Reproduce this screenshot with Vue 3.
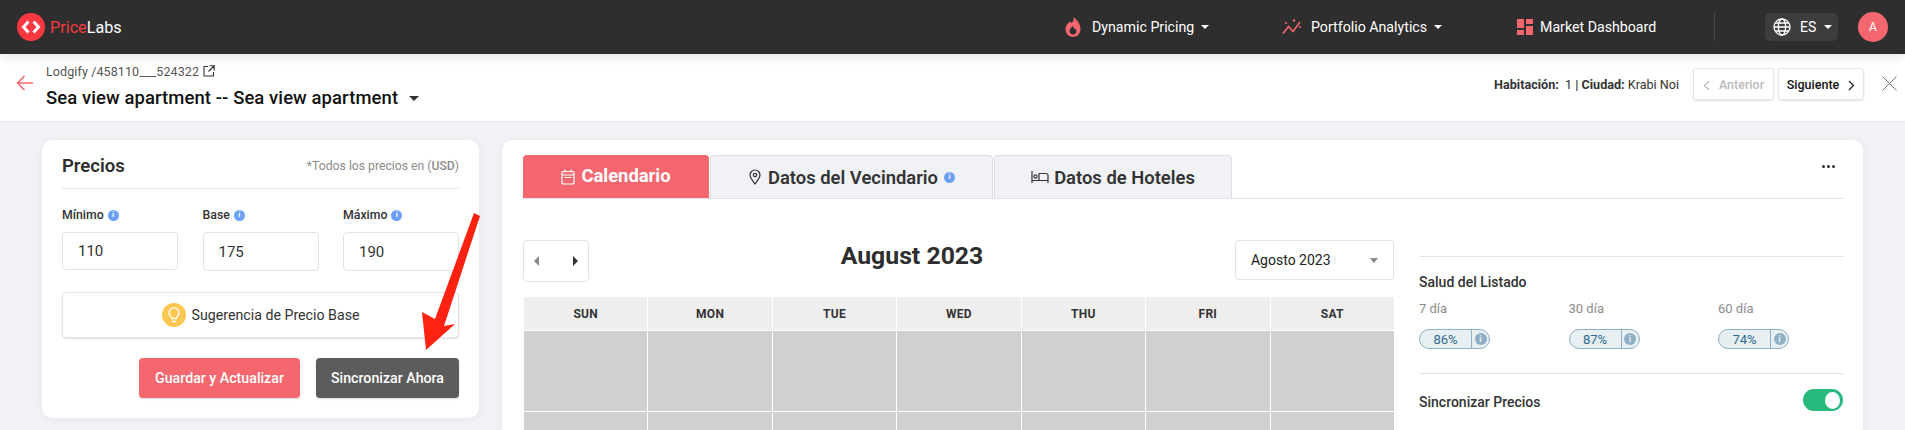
<script setup>
const fields = [
  { label: 'Mínimo', value: '110' },
  { label: 'Base', value: '175' },
  { label: 'Máximo', value: '190' }
]
const days = ['SUN', 'MON', 'TUE', 'WED', 'THU', 'FRI', 'SAT']
const cells = Array.from({ length: 14 }, (_, i) => i)
const health = [
  { label: '7 día', value: '86%' },
  { label: '30 día', value: '87%' },
  { label: '60 día', value: '74%' }
]
</script>

<template>
  <div class="page">
    <header class="topbar">
      <div class="brand">
        <svg class="logo" viewBox="0 0 28 28">
          <circle cx="14" cy="14" r="14" fill="#f9393f" />
          <path d="M11.500 8.500 6.500 14l5 5.500M16.500 8.500l5 5.500-5 5.500" fill="none" stroke="#fff" stroke-width="3" />
        </svg>
        <span class="brand-text"><span class="brand-red">Price</span>Labs</span>
      </div>
      <nav class="nav">
        <div class="nav-item w1">
          <svg class="ico-flame" viewBox="0 0 16 20"><path fill="#f5676f" fill-rule="evenodd" d="M8.500 0c.6 3-.6 4.600-2 6.300C5.800 5.500 5.500 4.800 5.300 4 2.500 6.500.5 9 .5 12.300.5 16.700 3.800 20 8 20s7.500-3.300 7.500-7.700C15.500 7.500 12.500 3 8.500 0zM8 17.500c-2 0-3.500-1.500-3.500-3.400 0-1.800 1.700-3.100 3.200-5 .7 2.400 3.800 2.900 3.800 5.200 0 1.800-1.500 3.200-3.500 3.200z" /></svg>
          <span>Dynamic Pricing</span><i class="caret light"></i>
        </div>
        <div class="nav-item w2">
          <svg class="ico-chart" viewBox="0 0 20 18"><path d="M1 15.500 6.500 8.500l4.500 5L18 4" fill="none" stroke="#f5676f" stroke-width="1.600" /><circle cx="4" cy="5" r="1.100" fill="#f5676f" /><circle cx="12" cy="2.500" r="1.200" fill="#f5676f" /><circle cx="18" cy="9" r="1.100" fill="#f5676f" /></svg>
          <span>Portfolio Analytics</span><i class="caret light"></i>
        </div>
        <div class="nav-item w3">
          <svg class="ico-dash" viewBox="0 0 16 16"><path fill="#f5676f" d="M0 0h7v9H0zM9 0h7v5H9zM9 7h7v9H9zM0 11h7v5H0z" /></svg>
          <span>Market Dashboard</span>
        </div>
      </nav>
      <div class="vline"></div>
      <div class="lang">
        <svg class="globe" viewBox="0 0 18 18" fill="none" stroke="#fff" stroke-width="1.300"><circle cx="9" cy="9" r="8" /><ellipse cx="9" cy="9" rx="3.600" ry="8" /><path d="M1 9h16M2.200 5h13.600M2.200 13h13.600" /></svg>
        <span>ES</span><i class="caret light"></i>
      </div>
      <div class="avatar">A</div>
    </header>

    <section class="subbar">
      <svg class="back" viewBox="0 0 17 16" fill="none" stroke="#f5676f" stroke-width="1.600"><path d="M17 8H1.500M8.500 1 1.500 8l7 7" /></svg>
      <div class="prop">
        <div class="crumb">
          <span>Lodgify /458110___524322</span>
          <svg class="ext" viewBox="0 0 12 12" fill="none" stroke="#333" stroke-width="1.100"><path d="M5 1.500H1v9.500h9.500V7M6.500 .8h4.700v4.700M11 1 5.500 6.500" /></svg>
        </div>
        <div class="prop-title"><span>Sea view apartment -- Sea view apartment</span><i class="caret dark"></i></div>
      </div>
      <div class="sub-right">
        <span class="meta"><b>Habitación:</b>&nbsp; 1 <b>| Ciudad:</b> Krabi Noi</span>
        <div class="pager disabled">
          <svg class="chev" viewBox="0 0 7 11" fill="none" stroke="#bbb" stroke-width="1.200"><path d="M6 1 1.500 5.500 6 10" /></svg>
          <span>Anterior</span>
        </div>
        <div class="pager">
          <span>Siguiente</span>
          <svg class="chev" viewBox="0 0 7 11" fill="none" stroke="#222" stroke-width="1.300"><path d="M1 1l4.500 4.500L1 10" /></svg>
        </div>
        <svg class="close" viewBox="0 0 15 15" fill="none" stroke="#777" stroke-width="1"><path d="M.5 .5l14 14M14.500 .5l-14 14" /></svg>
      </div>
    </section>

    <main class="main">
      <aside class="card prices">
        <div class="prices-head">
          <h2>Precios</h2>
          <span class="note">*Todos los precios en (<b>USD</b>)</span>
        </div>
        <div class="fields">
          <div v-for="f in fields" :key="f.label" class="field">
            <label>{{ f.label }} <i class="info">i</i></label>
            <div class="input">{{ f.value }}</div>
          </div>
        </div>
        <div class="suggest">
          <span class="bulb">
            <svg viewBox="0 0 24 24" fill="none" stroke="#fff" stroke-width="1.300"><path d="M9.800 15.500c0-1.600-2.800-2.700-2.800-5.700a5 5 0 0 1 10 0c0 3-2.800 4.100-2.800 5.700zM10 18.500h4" /></svg>
          </span>
          <span>Sugerencia de Precio Base</span>
        </div>
        <div class="actions">
          <button class="btn red">Guardar y Actualizar</button>
          <button class="btn grey">Sincronizar Ahora</button>
        </div>
      </aside>

      <section class="card board">
        <div class="tabs">
          <div class="tab active t1">
            <svg class="tab-ico" viewBox="0 0 14 16" fill="none" stroke="#fff" stroke-width="1.200"><rect x="1" y="2.500" width="12" height="12.500" rx="1" /><path d="M1 6h12M4 .5v3M10 .5v3M3.500 8.500h7" /></svg>
            <span>Calendario</span>
          </div>
          <div class="tab t2">
            <svg class="tab-ico" viewBox="0 0 12 16" fill="none" stroke="#333" stroke-width="1.200"><path d="M6 15C3 11 1 8.500 1 6a5 5 0 0 1 10 0c0 2.500-2 5-5 9z" /><circle cx="6" cy="6" r="1.700" /></svg>
            <span>Datos del Vecindario</span><i class="info">i</i>
          </div>
          <div class="tab t3">
            <svg class="tab-bed" viewBox="0 0 18 14" fill="none" stroke="#333" stroke-width="1.200"><path d="M1 1v12M1 10.500h16V13M17 10.500V5.500a2 2 0 0 0-2-2H8v7" /><circle cx="4.500" cy="6.500" r="1.600" /></svg>
            <span>Datos de Hoteles</span>
          </div>
          <div class="dots"><i></i><i></i><i></i></div>
        </div>

        <div class="columns">
          <div class="calendar">
            <div class="cal-head">
              <div class="arrows"><i class="tri left"></i><i class="tri right"></i></div>
              <h1>August 2023</h1>
              <div class="select"><span>Agosto 2023</span><i class="caret grey-caret"></i></div>
            </div>
            <div class="grid">
              <div v-for="d in days" :key="d" class="day">{{ d }}</div>
              <div v-for="c in cells" :key="c" class="cell"></div>
            </div>
          </div>

          <div class="side">
            <h3>Salud del Listado</h3>
            <div class="health">
              <div v-for="h in health" :key="h.label" class="metric">
                <div class="metric-label">{{ h.label }}</div>
                <div class="pill"><span class="pill-val">{{ h.value }}</span><span class="pill-info"><i>i</i></span></div>
              </div>
            </div>
            <div class="sync">
              <h3>Sincronizar Precios</h3>
              <div class="toggle"><i></i></div>
            </div>
          </div>
        </div>
      </section>
    </main>

    <svg class="pointer" viewBox="0 0 70 150" fill="#ff2210">
      <path d="M54 3 60 6 24 116 35 114 6 140 2 102 15 109z" />
    </svg>
  </div>
</template>

<style>
html, body { margin: 0; background: #f0f2f6; overflow: hidden; }
</style>

<style scoped>
.page { position: relative; width: 1905px; height: 430px; overflow: hidden; background: #f0f2f6; font-family: Roboto, "Noto Sans", sans-serif; color: #2e2e2e; }
.topbar { height: 54px; background: #2e2e2e; display: flex; align-items: center; color: #fff; padding-left: 17px; box-sizing: border-box; position: relative; z-index: 2; box-shadow: 0 2px 10px rgba(0,0,0,.12); }
.brand { display: flex; align-items: center; gap: 5px; width: 1048px; }
.logo { width: 28px; height: 28px; }
.brand-text { font-size: 16.200px; font-weight: 400; }
.brand-red { color: #f9393f; }
.nav { display: flex; align-items: center; font-size: 14.200px; }
.nav-item { display: flex; align-items: center; }
.w1 { width: 217px; }
.w2 { width: 235px; }
.w3 { width: 197px; }
.ico-flame { width: 16px; height: 20px; margin-right: 11px; }
.ico-chart { width: 20px; height: 18px; margin-right: 9px; }
.ico-dash { width: 16px; height: 16px; margin-right: 7px; }
.caret { display: inline-block; width: 0; height: 0; border-left: 4px solid transparent; border-right: 4px solid transparent; }
.caret.light { border-top: 4px solid #fff; margin-left: 7px; }
.caret.dark { border-top: 5px solid #333; border-left-width: 5px; border-right-width: 5px; margin-left: 11px; }
.vline { width: 1px; height: 28px; background: #4a4a4a; margin-right: 50px; }
.lang { width: 73px; height: 28px; background: #3d3d3d; border-radius: 5px; display: flex; align-items: center; box-sizing: border-box; padding-left: 8px; font-size: 14px; margin-right: 20px; }
.globe { width: 18px; height: 18px; margin-right: 9px; }
.lang .caret.light { margin-left: 8px; }
.avatar { width: 30px; height: 30px; border-radius: 50%; background: #f5676f; display: flex; align-items: center; justify-content: center; font-size: 12px; }

.subbar { height: 68px; background: #fff; display: flex; box-sizing: border-box; border-bottom: 1px solid #e4e6ee; position: relative; }
.back { width: 17px; height: 16px; margin: 21px 13px 0 16px; flex: none; }
.prop { padding-top: 9px; flex: 1; }
.crumb { display: flex; align-items: center; font-size: 12.500px; color: #555; height: 16px; letter-spacing: .1px; }
.ext { width: 12px; height: 12px; margin-left: 4px; }
.prop-title { display: flex; align-items: center; font-size: 18.450px; font-weight: 500; color: #111; margin-top: 8px; height: 22px; letter-spacing: .1px; }
.sub-right { display: flex; align-items: flex-start; padding-top: 14px; }
.meta { font-size: 12.600px; color: #333; margin-top: 9px; margin-right: 14px; white-space: nowrap; }
.meta b { font-weight: 700; }
.pager { height: 32px; box-sizing: border-box; border: 1px solid #e5e5e5; border-radius: 3px; box-shadow: 0 1px 2px rgba(0,0,0,.12); display: flex; align-items: center; justify-content: center; font-size: 12.500px; font-weight: 500; color: #111; width: 86px; gap: 9px; }
.pager.disabled { width: 81px; color: #bbb; margin-right: 4px; }
.chev { width: 7px; height: 11px; margin-top: 2px; }
.close { width: 15px; height: 15px; margin: 8px 8px 0 18px; }

.main { display: flex; gap: 23px; padding: 18px 0 0 42px; }
.card { background: #fff; border-radius: 10px; box-shadow: 0 1px 6px rgba(50,60,90,.07); box-sizing: border-box; }
.prices { width: 437px; height: 278px; padding: 0 20px; flex: none; }
.prices-head { display: flex; align-items: center; justify-content: space-between; border-bottom: 1px solid #e5e5e5; padding-top: 4px; box-sizing: border-box; height: 49px; }
.prices-head h2 { margin: 0; font-size: 18.500px; font-weight: 600; color: #2e2e2e; }
.note { font-size: 12.200px; color: #8c8c8c; }
.note b { font-weight: 500; }
.fields { display: flex; justify-content: space-between; margin-top: 17px; }
.field { width: 116px; }
.field label { display: flex; align-items: center; gap: 4px; font-size: 12.300px; font-weight: 500; height: 18px; color: #333; }
.info { display: inline-flex; width: 11px; height: 11px; border-radius: 50%; background: #6ca0f5; color: #fff; font-size: 8px; font-style: normal; font-weight: 700; align-items: center; justify-content: center; line-height: 1; }
.input { height: 38px; margin-top: 8px; box-sizing: border-box; border: 1px solid #e2e2e2; border-radius: 4px; display: flex; align-items: center; padding-left: 15px; font-size: 15px; color: #333; }
.field:not(:first-child) .input { height: 39px; }
.suggest { height: 46px; margin-top: 21px; box-sizing: border-box; border: 1px solid #e2e2e2; border-radius: 4px; box-shadow: 0 1px 2px rgba(0,0,0,.12); display: flex; align-items: center; justify-content: center; gap: 6px; font-size: 14.200px; color: #333; }
.bulb { width: 24px; height: 24px; border-radius: 50%; background: #ffc751; display: flex; }
.bulb svg { width: 24px; height: 24px; }
.actions { display: flex; justify-content: flex-end; gap: 16px; margin-top: 20px; }
.btn { height: 40px; border: 0; border-radius: 4px; color: #fff; font: 500 14.200px Roboto, sans-serif; padding: 0; box-shadow: 0 1px 2px rgba(0,0,0,.15); }
.btn.red { width: 161px; background: #f5676f; }
.btn.grey { width: 143px; background: #5c5c5c; }

.board { width: 1361px; height: 400px; padding: 15px 20px 0 21px; flex: none; }
.tabs { display: flex; height: 44px; box-sizing: border-box; border-bottom: 1px solid #e2e2e2; position: relative; align-items: stretch; }
.tab { box-sizing: border-box; background: #f0f2f6; border: 1px solid #dcdee5; border-bottom: 0; border-radius: 4px 4px 0 0; display: flex; align-items: center; justify-content: center; font-size: 18.400px; font-weight: 600; color: #333; margin-right: 1px; }
.tab.active { background: #f5676f; color: #fff; border-color: #f5676f; font-weight: 700; }
.t1 { width: 186px; }
.t2 { width: 283px; }
.t3 { width: 238px; }
.tab-ico { width: 14px; height: 16px; margin-right: 6px; }
.tab-bed { width: 18px; height: 14px; margin-right: 5px; }
.t2 .info { margin-left: 6px; }
.t1 span { margin-top: -3px; }
.dots { position: absolute; right: 8px; top: 10px; display: flex; gap: 2px; }
.dots i { width: 3px; height: 3px; border-radius: 50%; background: #333; }

.columns { display: flex; gap: 25px; margin-top: 41px; }
.calendar { width: 871px; flex: none; }
.cal-head { height: 40px; display: flex; justify-content: space-between; align-items: flex-start; position: relative; }
.arrows { width: 66px; height: 42px; box-sizing: border-box; border: 1px solid #e2e2e2; border-radius: 4px; display: flex; align-items: center; justify-content: space-between; padding: 0 10px; }
.tri { width: 0; height: 0; border-top: 5px solid transparent; border-bottom: 5px solid transparent; }
.tri.left { border-right: 5px solid #888; }
.tri.right { border-left: 5px solid #333; }
.cal-head h1 { margin: 0; font-size: 24.800px; font-weight: 700; line-height: 32px; color: #2e2e2e; }
.select { width: 159px; height: 40px; box-sizing: border-box; border: 1px solid #e2e2e2; border-radius: 4px; display: flex; align-items: center; justify-content: space-between; padding: 0 15px; font-size: 14px; color: #222; }
.grey-caret { border-top: 5px solid #888; }
.grid { display: grid; grid-template-columns: repeat(7, 1fr); grid-template-rows: 33px; grid-auto-rows: 80px; gap: 1px; margin-top: 17px; padding-left: 1px; }
.day { height: 33px; background: #eee; display: flex; align-items: center; justify-content: center; font-size: 12px; font-weight: 700; color: #333; letter-spacing: .3px; }
.cell { background: #d0d0d0; }

.side { flex: 1; min-width: 0; margin-top: 16px; border-top: 1px solid #e2e2e2; }
.side h3 { margin: 0; font-size: 14px; font-weight: 500; color: #333; }
.side > h3 { margin-top: 16px; line-height: 18px; }
.health { display: flex; margin-top: 9px; padding-bottom: 24px; border-bottom: 1px solid #e2e2e2; }
.metric { width: 149.500px; flex: none; }
.metric:last-child { width: auto; }
.metric-label { font-size: 13px; color: #8c8c8c; line-height: 18px; }
.pill { width: 71px; height: 20px; margin-top: 11px; box-sizing: border-box; border: 1px solid #8fb0c4; border-radius: 10px; background: #e8eff3; display: flex; color: #2d6a8f; font-size: 13px; }
.pill-val { width: 51px; display: flex; align-items: center; justify-content: center; border-right: 1px solid #8fb0c4; }
.pill-info { flex: 1; display: flex; align-items: center; justify-content: center; }
.pill-info i { width: 12px; height: 12px; border-radius: 50%; background: #8fb0c4; color: #e8eff3; font-size: 9px; font-style: normal; font-weight: 700; display: flex; align-items: center; justify-content: center; }
.sync { display: flex; justify-content: space-between; align-items: flex-start; margin-top: 15px; }
.sync h3 { margin-top: 5px; }
.toggle { width: 40px; height: 22px; border-radius: 11px; background: #28b97f; display: flex; align-items: center; justify-content: flex-end; padding-right: 3px; box-sizing: border-box; }
.toggle i { width: 15px; height: 17px; border-radius: 50%; background: #fff; }

.pointer { position: absolute; left: 420px; top: 210px; width: 70px; height: 150px; z-index: 3; }
</style>
